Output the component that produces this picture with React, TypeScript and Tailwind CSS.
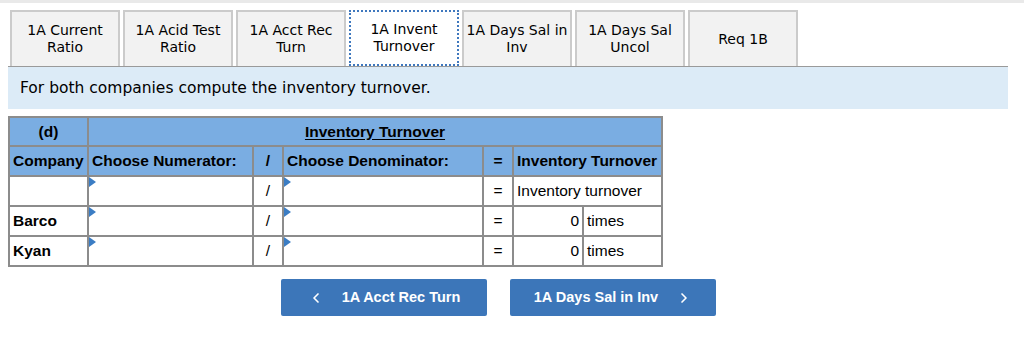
import { ChevronLeft, ChevronRight } from 'lucide-react'

const tabs = [
    { id: 'cur', label: ['1A Current', 'Ratio'] },
    { id: 'acid', label: ['1A Acid Test', 'Ratio'] },
    { id: 'ar', label: ['1A Acct Rec', 'Turn'] },
    { id: 'inv', label: ['1A Invent', 'Turnover'] },
    { id: 'dsi', label: ['1A Days Sal in', 'Inv'] },
    { id: 'dsu', label: ['1A Days Sal', 'Uncol'] },
    { id: 'req1b', label: ['Req 1B'] },
]

const activeTab = 'inv'

const companies = ['Barco', 'Kyan']

// small blue marker in the corner of a dropdown cell
function DropMarker() {
    return (
        <span className="absolute left-0 top-0 h-0 w-0 border-y-[5px] border-l-[7px] border-y-transparent border-l-[#3b7dc4]" />
    )
}

const cell = 'border-2 border-[#8c8c8c] px-[3px]'

export default function App() {
    return (
        <div className="h-[351px] w-[1024px] bg-white font-['Liberation_Sans',Arial,sans-serif] text-black">
            <div className="h-[3px] w-full bg-[#e9e9e9]" />

            {/* tab strip */}
            <div className="ml-[8px] mt-[7px] w-[1000px] border-b border-[#9a9a9a]">
                <div className="ml-[2px] flex items-end gap-[3px] font-['DejaVu_Sans',Verdana,sans-serif] text-[14px] leading-[17px]">
                    {tabs.map(tab => (
                        <div
                            key={tab.id}
                            className={`flex h-[56px] w-[110px] flex-col items-center justify-center text-center ${tab.id === activeTab
                                ? 'border-2 border-dotted border-[#3f78be] bg-white'
                                : 'border-2 border-b-0 border-[#cbcbcb] bg-[#f2f2f2]'
                                }`}
                        >
                            {tab.label.map(line => (
                                <span key={line} className="whitespace-nowrap">{line}</span>
                            ))}
                        </div>
                    ))}
                </div>
            </div>

            <div className="ml-[8px] flex h-[42px] w-[1000px] items-center bg-[#dcebf7] pl-[12px] pt-[2px] font-['DejaVu_Sans',Verdana,sans-serif] text-[15.5px]">
                For both companies compute the inventory turnover.
            </div>

            {/* ratio table */}
            <table className="ml-[8px] mt-[7px] border-collapse text-[15.5px] leading-[18px]">
                <colgroup>
                    <col className="w-[79px]" />
                    <col className="w-[165px]" />
                    <col className="w-[30px]" />
                    <col className="w-[200px]" />
                    <col className="w-[30px]" />
                    <col className="w-[70px]" />
                    <col className="w-[79px]" />
                </colgroup>
                <thead className="bg-[#7aade2] font-bold">
                    <tr className="h-[29px]">
                        <th className={`${cell} text-center`}>(d)</th>
                        <th colSpan={6} className={`${cell} text-center`}>
                            <span className="underline underline-offset-2">Inventory Turnover</span>
                        </th>
                    </tr>
                    <tr className="h-[30px]">
                        <th className={`${cell} text-left`}>Company</th>
                        <th className={`${cell} text-left`}>Choose Numerator:</th>
                        <th className={`${cell} text-center`}>/</th>
                        <th className={`${cell} text-left`}>Choose Denominator:</th>
                        <th className={`${cell} text-center`}>=</th>
                        <th colSpan={2} className={`${cell} text-left`}>Inventory Turnover</th>
                    </tr>
                </thead>
                <tbody>
                    <tr className="h-[30px]">
                        <td className={cell} />
                        <td className={`${cell} relative`}><DropMarker /></td>
                        <td className={`${cell} text-center`}>/</td>
                        <td className={`${cell} relative`}><DropMarker /></td>
                        <td className={`${cell} text-center`}>=</td>
                        <td colSpan={2} className={cell}>Inventory turnover</td>
                    </tr>
                    {companies.map(name => (
                        <tr key={name} className="h-[30px]">
                            <td className={`${cell} font-bold`}>{name}</td>
                            <td className={`${cell} relative`}><DropMarker /></td>
                            <td className={`${cell} text-center`}>/</td>
                            <td className={`${cell} relative`}><DropMarker /></td>
                            <td className={`${cell} text-center`}>=</td>
                            <td className={`${cell} text-right`}>0</td>
                            <td className={cell}>times</td>
                        </tr>
                    ))}
                </tbody>
            </table>

            {/* prev / next navigation */}
            <div className="ml-[281px] mt-[12px] flex gap-[23px] text-[14.5px] font-bold text-white">
                <button className="flex h-[37px] w-[206px] items-center justify-center gap-[18px] rounded-[2px] bg-[#3c76b9]">
                    <ChevronLeft size={16} strokeWidth={2.5} />
                    <span>1A Acct Rec Turn</span>
                </button>
                <button className="flex h-[37px] w-[206px] items-center justify-center gap-[18px] rounded-[2px] bg-[#3c76b9]">
                    <span>1A Days Sal in Inv</span>
                    <ChevronRight size={16} strokeWidth={2.5} />
                </button>
            </div>
        </div>
    )
}
